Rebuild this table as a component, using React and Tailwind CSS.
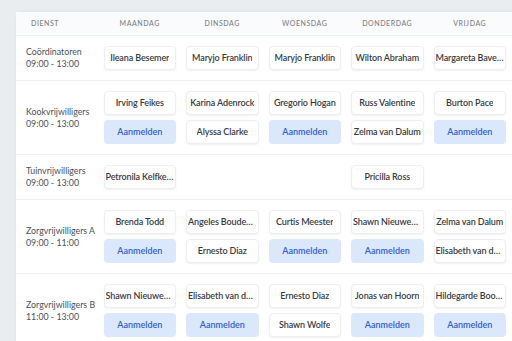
import React from "react";

const days = ["Maandag", "Dinsdag", "Woensdag", "Donderdag", "Vrijdag"];

// "+" = aanmelden button, empty array = empty cell
const rows = [
  {
    name: "Coördinatoren",
    time: "09:00 - 13:00",
    cells: [["Ileana Besemer"], ["Maryjo Franklin"], ["Maryjo Franklin"], ["Wilton Abraham"], ["Margareta Bavelaar"]],
  },
  {
    name: "Kookvrijwilligers",
    time: "09:00 - 13:00",
    cells: [
      ["Irving Feikes", "+"],
      ["Karina Adenrock", "Alyssa Clarke"],
      ["Gregorio Hogan", "+"],
      ["Russ Valentine", "Zelma van Dalum"],
      ["Burton Pace", "+"],
    ],
  },
  {
    name: "Tuinvrijwilligers",
    time: "09:00 - 13:00",
    cells: [["Petronila Kelfkens"], [], [], ["Pricilla Ross"], []],
  },
  {
    name: "Zorgvrijwilligers A",
    time: "09:00 - 11:00",
    cells: [
      ["Brenda Todd", "+"],
      ["Angeles Boudewijns", "Ernesto Diaz"],
      ["Curtis Meester", "+"],
      ["Shawn Nieuwenhuis", "+"],
      ["Zelma van Dalum", "Elisabeth van der Berg"],
    ],
  },
  {
    name: "Zorgvrijwilligers B",
    time: "11:00 - 13:00",
    cells: [
      ["Shawn Nieuwenhuis", "+"],
      ["Elisabeth van der Berg", "+"],
      ["Ernesto Diaz", "Shawn Wolfe"],
      ["Jonas van Hoorn", "+"],
      ["Hildegarde Boonstra", "+"],
    ],
  },
];

const Chip = ({ label }) => {
  if (label === "+") {
    return (
      <button className="h-[24px] w-full rounded-[4px] bg-[#dbe8fc] text-[9px] font-semibold text-[#2d5ed3]">
        Aanmelden
      </button>
    );
  }
  return (
    <div className="flex h-[24px] w-full items-center justify-center rounded-[4px] border border-[#eceef1] bg-white px-[1px] text-[9px] font-semibold tracking-[-0.12px] text-[#373b42] shadow-[0_1px_2px_rgba(0,0,0,0.06)]">
      <span className="truncate">{label}</span>
    </div>
  );
};

export default function App() {
  return (
    <div
      className="h-[341px] w-[512px] overflow-hidden bg-[#eaedf0] pl-[16px] pt-[12px]"
      style={{ fontFamily: 'Lato, "Noto Sans", sans-serif' }}
    >
      <div className="w-[520px] rounded-tl-lg bg-white shadow-[0_0_4px_rgba(0,0,0,0.06)]">
        <div className="grid h-[24px] grid-cols-[82.5px_repeat(5,82.5px)] items-center border-b border-[#eef0f2] bg-[#fafbfc] text-[7px] font-medium uppercase tracking-[0.08em] text-[#7a7f87]">
          <div className="pl-[15px]">Dienst</div>
          {days.map((d) => (
            <div key={d} className="text-center">
              {d}
            </div>
          ))}
        </div>
        {rows.map((row) => (
          <div
            key={row.name}
            className="grid grid-cols-[82.5px_repeat(5,82.5px)] border-b border-[#eef0f2] py-[10px]"
          >
            <div className="flex flex-col justify-center whitespace-nowrap pl-[10px] text-[8.8px] leading-[12px] text-[#4b5058]">
              <span>{row.name}</span>
              <span>{row.time}</span>
            </div>
            {row.cells.map((cell, i) => (
              <div key={i} className="flex flex-col gap-[5px] px-[5px]">
                {cell.map((label, j) => (
                  <Chip key={j} label={label} />
                ))}
              </div>
            ))}
          </div>
        ))}
      </div>
    </div>
  );
}
